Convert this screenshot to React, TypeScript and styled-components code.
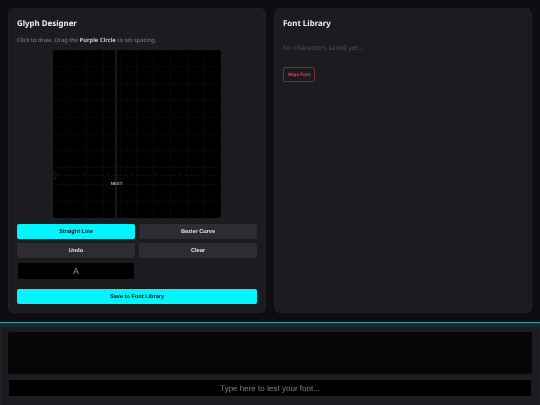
import styled, { createGlobalStyle } from "styled-components";

const GlobalStyle = createGlobalStyle`
  html, body {
    margin: 0;
    padding: 0;
    height: 100%;
    background: #0e0e12;
  }
  #root {
    height: 100%;
  }
  * {
    box-sizing: border-box;
    text-rendering: geometricPrecision;
  }
`;

const Page = styled.div`
  width: 540px;
  height: 405px;
  display: flex;
  flex-direction: column;
  overflow: hidden;
  background: #0e0e12;
  filter: blur(0.3px);
`;

const Main = styled.div`
  display: grid;
  grid-template-columns: 1fr 1fr;
  gap: 8px;
  padding: 8px 8px 9px;
  height: 322px;
`;

const Panel = styled.section`
  background: #1c1c20;
  border: 1px solid #212125;
  border-radius: 6px;
  padding: 8px;
  display: flex;
  flex-direction: column;
`;

const Title = styled.h2`
  margin: 0;
  padding-top: 1px;
  font: 700 7.9px/12px "Noto Sans", sans-serif;
  color: #f0f0f2;
`;

const Hint = styled.p`
  margin: 6px 0 0;
  font: 400 5.77px/8px "Noto Sans", sans-serif;
  color: #85868b;
  b {
    color: #c4c5c8;
    font-weight: 700;
  }
`;

const Canvas = styled.svg`
  display: block;
  width: 168px;
  height: 168px;
  margin: 6px auto 0;
  background: #000;
  border-radius: 3px;
`;

const Tools = styled.div`
  display: grid;
  grid-template-columns: 1fr 1fr;
  gap: 4px;
  margin-top: 6px;
`;

const Button = styled.button<{ $active?: boolean }>`
  height: 15px;
  padding: 1px 0 0;
  border: none;
  border-radius: 2px;
  font: 700 5.6px/14px "Liberation Sans", sans-serif;
  background: ${(p) => (p.$active ? "#00f5ff" : "#2c2c32")};
  color: ${(p) => (p.$active ? "#0b0c10" : "#e4e4e6")};
`;

const CharInput = styled.input`
  height: 18px;
  width: 100%;
  padding: 0;
  border: 1px solid #1c1c20;
  border-radius: 2px;
  background: #000;
  color: #85868a;
  text-align: center;
  font: 400 9px "Liberation Sans", sans-serif;
  outline: none;
`;

const SaveButton = styled(Button)`
  width: 100%;
  margin-top: 9px;
`;

const Empty = styled.p`
  margin: 13px 0 0;
  font: 400 6.7px/10px "Noto Sans", sans-serif;
  color: #505156;
`;

const WipeButton = styled.button`
  align-self: flex-start;
  height: 15px;
  margin-top: 14px;
  padding: 0 4px;
  background: transparent;
  border: 1px solid #7a2c3a;
  border-radius: 2px;
  color: #e0405a;
  font: 700 4.6px/13px "Liberation Sans", sans-serif;
`;

const TestBar = styled.footer`
  flex: 1;
  display: flex;
  flex-direction: column;
  gap: 5px;
  padding: 9px 8px 8px;
  background: #1c1c20;
  border-top: 1px solid #27a0a4;
  box-shadow: inset 0 3px 4px -1px rgba(0, 245, 255, 0.1);
`;

const Preview = styled.div`
  height: 42px;
  background: #060607;
  border-radius: 2px;
`;

const TestInput = styled.input`
  height: 18px;
  width: 100%;
  padding: 0;
  border: 1px solid #1c1c20;
  border-radius: 2px;
  background: #000;
  color: #ddd;
  text-align: center;
  font: 400 8px "Liberation Sans", sans-serif;
  outline: none;
  &::placeholder {
    color: #808185;
    opacity: 1;
  }
`;

const gridSteps = [1, 2, 3, 4, 5, 6, 7, 8, 9];

function GlyphCanvas() {
  return (
    <Canvas viewBox="0 0 168 168">
      {gridSteps.map((i) => (
        <g key={i} stroke="#09090a" strokeWidth="1">
          <line x1={i * 16.8} y1="0" x2={i * 16.8} y2="168" />
          <line x1="0" y1={i * 16.8} x2="168" y2={i * 16.8} />
        </g>
      ))}
      <line x1="0" y1="125.5" x2="168" y2="125.5" stroke="#161618" strokeWidth="1" strokeDasharray="2 4" />
      <line x1="63" y1="0" x2="63" y2="168" stroke="#18181a" strokeWidth="2" />
      <circle cx="0" cy="125.5" r="3.5" fill="none" stroke="#232326" strokeWidth="1" />
      <text x="63.5" y="134.5" textAnchor="middle" fill="#e8e8ea" fontSize="4.4" fontFamily="Liberation Sans, sans-serif">
        NEXT
      </text>
    </Canvas>
  );
}

export default function App() {
  return (
    <Page>
      <GlobalStyle />
      <Main>
        <Panel>
          <Title>Glyph Designer</Title>
          <Hint>
            Click to draw. Drag the <b>Purple Circle</b> to set spacing.
          </Hint>
          <GlyphCanvas />
          <Tools>
            <Button $active>Straight Line</Button>
            <Button>Bezier Curve</Button>
            <Button>Undo</Button>
            <Button>Clear</Button>
            <CharInput defaultValue="A" />
          </Tools>
          <SaveButton $active>Save to Font Library</SaveButton>
        </Panel>
        <Panel>
          <Title>Font Library</Title>
          <Empty>No characters saved yet...</Empty>
          <WipeButton>Wipe Font</WipeButton>
        </Panel>
      </Main>
      <TestBar>
        <Preview />
        <TestInput placeholder="Type here to test your font..." />
      </TestBar>
    </Page>
  );
}
